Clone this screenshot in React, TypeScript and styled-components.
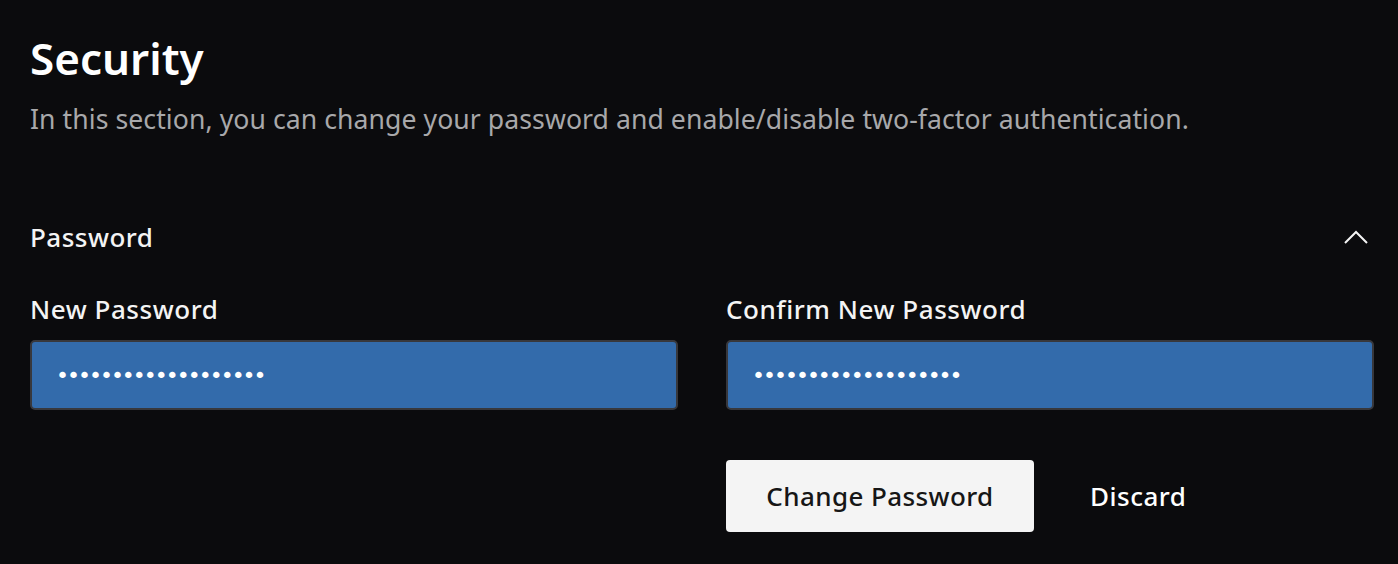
import React from "react";
import styled, { createGlobalStyle } from "styled-components";

const Global = createGlobalStyle`
  html, body { margin: 0; padding: 0; background: #0b0b0d; }
  body { font-family: "Noto Sans", "Open Sans", sans-serif; color: #f4f4f4; }
  * { box-sizing: border-box; }
`;

const Page = styled.div`
  padding: 28px 24px 0 30px;
  display: flex;
  flex-direction: column;
`;

const Title = styled.h1`
  margin: 0;
  font-size: 44px;
  line-height: 60px;
  font-weight: 600;
  color: #ffffff;
`;

const Subtitle = styled.p`
  margin: 14px 0 0 0;
  font-size: 26.6px;
  line-height: 34px;
  font-weight: 400;
  letter-spacing: 0.07px;
  color: #a8a8aa;
`;

const SectionHeader = styled.div`
  margin-top: 83px;
  display: flex;
  align-items: center;
  justify-content: space-between;
  height: 36px;
`;

const SectionTitle = styled.span`
  font-size: 26px;
  font-weight: 500;
  letter-spacing: 0.5px;
  color: #f4f4f4;
`;

const Chevron = styled.svg`
  width: 28px;
  height: 16px;
  margin-right: 4px;
`;

const Fields = styled.div`
  margin-top: 38px;
  display: grid;
  grid-template-columns: 1fr 1fr;
  column-gap: 48px;
`;

const Field = styled.label`
  display: flex;
  flex-direction: column;
  gap: 15px;
`;

const Label = styled.span`
  font-size: 26px;
  line-height: 32px;
  font-weight: 500;
  letter-spacing: 0.55px;
  color: #f4f4f4;
`;

const Input = styled.input`
  height: 70px;
  width: 100%;
  background: #336bab;
  border: 2px solid #38383c;
  border-radius: 5px;
  padding: 0 24px;
  color: #ffffff;
  font-family: "DejaVu Sans", sans-serif;
  font-size: 22px;
  letter-spacing: -2px;
  outline: none;
`;

const Actions = styled.div`
  margin-top: 50px;
  display: grid;
  grid-template-columns: 1fr 1fr;
  column-gap: 48px;
`;

const ButtonRow = styled.div`
  grid-column: 2;
  display: flex;
  align-items: center;
  gap: 56px;
`;

const PrimaryButton = styled.button`
  height: 72px;
  width: 308px;
  background: #f4f4f4;
  border: none;
  border-radius: 4px;
  color: #161616;
  font-family: inherit;
  font-size: 26px;
  font-weight: 500;
  letter-spacing: 0.4px;
  cursor: pointer;
`;

const GhostButton = styled.button`
  background: transparent;
  border: none;
  padding: 0;
  color: #ffffff;
  font-family: inherit;
  font-size: 26px;
  font-weight: 500;
  letter-spacing: 0.5px;
  cursor: pointer;
`;

export default function App() {
  const pw = "abcdefghijklmnopqrs";
  return (
    <>
      <Global />
      <Page>
        <Title>Security</Title>
        <Subtitle>
          In this section, you can change your password and enable/disable two-factor authentication.
        </Subtitle>
        <SectionHeader>
          <SectionTitle>Password</SectionTitle>
          <Chevron viewBox="0 0 28 16" fill="none">
            <path d="M3 14 L14 3 L25 14" stroke="#f4f4f4" strokeWidth="2" />
          </Chevron>
        </SectionHeader>
        <Fields>
          <Field>
            <Label>New Password</Label>
            <Input type="password" value={pw} readOnly />
          </Field>
          <Field>
            <Label>Confirm New Password</Label>
            <Input type="password" value={pw} readOnly />
          </Field>
        </Fields>
        <Actions>
          <ButtonRow>
            <PrimaryButton>Change Password</PrimaryButton>
            <GhostButton>Discard</GhostButton>
          </ButtonRow>
        </Actions>
      </Page>
    </>
  );
}
